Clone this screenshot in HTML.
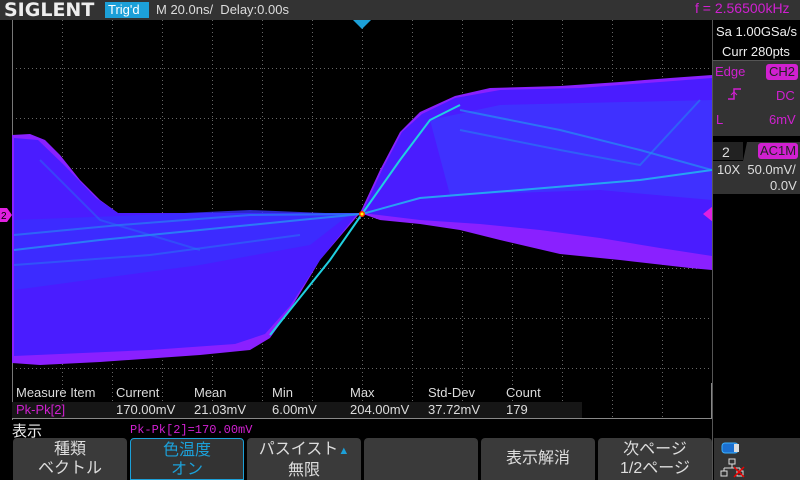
<!DOCTYPE html><html><head><meta charset="utf-8"><style>
*{margin:0;padding:0;box-sizing:border-box}
body{width:800px;height:480px;background:#000;position:relative;overflow:hidden;font-family:"Liberation Sans","Noto Sans CJK JP",sans-serif;color:#ddd}
.a{position:absolute;white-space:nowrap}
.btn{position:absolute;top:438px;width:114px;height:42px;background:#3a3a3a;border-radius:4px 4px 0 0;color:#ddd;font-size:16px;text-align:center;line-height:19px;padding-top:2px}
</style></head><body>
<div class="a" style="left:0;top:0;width:800px;height:20px;background:#333"></div>
<div class="a" style="left:4px;top:-1px;font-size:19px;font-weight:bold;color:#eee;font-family:'DejaVu Sans',sans-serif">SIGLENT</div>
<div class="a" style="left:105px;top:2px;width:44px;height:16px;background:#1ca0d8;color:#fff;font-size:13px;line-height:16px;padding-left:3px">Trig'd</div>
<div class="a" style="left:156px;top:2px;font-size:13px;color:#ddd">M 20.0ns/&nbsp; Delay:0.00s</div>
<div class="a" style="left:695px;top:0px;font-size:14px;color:#d020d0">f = 2.56500kHz</div>
<svg class="a" style="left:0;top:20px" width="712" height="400">
<g stroke="#666" stroke-dasharray="1,3" stroke-width="1">
<line x1="62.5" y1="0" x2="62.5" y2="400"/><line x1="112.5" y1="0" x2="112.5" y2="400"/><line x1="162.5" y1="0" x2="162.5" y2="400"/><line x1="212.5" y1="0" x2="212.5" y2="400"/><line x1="262.5" y1="0" x2="262.5" y2="400"/><line x1="312.5" y1="0" x2="312.5" y2="400"/><line x1="362.5" y1="0" x2="362.5" y2="400"/><line x1="412.5" y1="0" x2="412.5" y2="400"/><line x1="462.5" y1="0" x2="462.5" y2="400"/><line x1="512.5" y1="0" x2="512.5" y2="400"/><line x1="562.5" y1="0" x2="562.5" y2="400"/><line x1="612.5" y1="0" x2="612.5" y2="400"/><line x1="662.5" y1="0" x2="662.5" y2="400"/>
<line x1="12" y1="48.5" x2="712" y2="48.5"/><line x1="12" y1="98.5" x2="712" y2="98.5"/><line x1="12" y1="148.5" x2="712" y2="148.5"/><line x1="12" y1="198.5" x2="712" y2="198.5"/><line x1="12" y1="248.5" x2="712" y2="248.5"/><line x1="12" y1="298.5" x2="712" y2="298.5"/><line x1="12" y1="348.5" x2="712" y2="348.5"/>
</g>
<line x1="12.5" y1="0" x2="12.5" y2="400" stroke="#777"/>
<!-- left blob -->
<polygon fill="#8a20ff" points="12,115 30,114 45,120 60,135 80,160 100,180 118,193 360,193 320,240 290,290 270,318 250,330 200,335 100,342 40,345 12,343"/>
<polygon fill="#4a1cff" points="14,118 38,120 64,145 96,178 118,193 358,193 320,240 290,286 265,314 235,324 150,330 60,334 14,336"/>
<polygon fill="#3830ff" opacity=".8" points="14,200 120,196 250,190 350,194 310,225 200,245 14,270"/>
<!-- right blob -->
<polygon fill="#8a20ff" points="360,193 380,150 400,112 420,92 455,76 490,68 560,66 620,62 670,58 712,55 712,250 690,248 620,240 560,234 500,220 460,210 420,204 380,200"/>
<polygon fill="#4a1cff" points="362,193 382,150 402,112 422,94 455,78 500,70 580,68 660,62 712,58 712,236 660,228 600,218 540,210 480,204 420,200"/>
<polygon fill="#3840ff" opacity=".6" points="430,100 500,85 712,80 712,180 600,170 450,175"/>
<!-- traces -->
<g fill="none" stroke-width="2">
<path d="M270 315 L330 240 L362 194 L400 140 L430 100 L460 85" stroke="#20d0e0"/>
<path d="M362 194 L420 178 L520 170 L640 160 L712 150" stroke="#20c0f0" opacity=".8"/>
<path d="M460 90 L560 110 L640 130 L712 150" stroke="#20a0f0" opacity=".6"/>
<path d="M460 110 L560 130 L640 145 L700 80" stroke="#2090f0" opacity=".5"/>
<path d="M14 230 L100 220 L200 210 L300 200 L362 194" stroke="#20b0f0" opacity=".6"/>
<path d="M14 215 L120 205 L250 195 L362 194" stroke="#20a0f0" opacity=".5"/>
<path d="M14 245 L150 235 L300 215" stroke="#2090f0" opacity=".4"/>
<path d="M40 140 L100 200 L200 230" stroke="#2080f0" opacity=".4"/>
</g>
<circle cx="362" cy="194" r="3" fill="#ff3000"/>
<circle cx="362" cy="194" r="1.5" fill="#ffff00"/>
</svg>
<svg class="a" style="left:352px;top:20px" width="20" height="10"><polygon points="1,0 19,0 10,9" fill="#1ca0d8"/></svg>
<svg class="a" style="left:0;top:208px" width="12" height="14"><polygon points="0,0 7,0 12,7 7,14 0,14" fill="#e020e0"/><text x="1" y="11" font-size="10" fill="#000" font-family="Liberation Sans">2</text></svg>
<svg class="a" style="left:703px;top:206px" width="10" height="16"><polygon points="10,0 0,8 10,16" fill="#e020e0"/></svg>
<!-- right panel -->
<div class="a" style="left:712px;top:20px;width:1px;height:460px;background:#555"></div>
<div class="a" style="left:716px;top:24px;font-size:13px;color:#eee">Sa 1.00GSa/s</div>
<div class="a" style="left:722px;top:44px;font-size:13px;color:#eee">Curr 280pts</div>
<div class="a" style="left:713px;top:60px;width:87px;height:76px;background:#333;border-top:1px solid #555"></div>
<div class="a" style="left:715px;top:64px;font-size:13px;color:#d020d0">Edge</div>
<div class="a" style="left:766px;top:64px;width:32px;height:16px;background:#d020d0;border-radius:3px;color:#222;font-size:13px;text-align:center;line-height:16px">CH2</div>
<svg class="a" style="left:727px;top:87px" width="16" height="14"><path d="M1 12 H7 V2 H14" stroke="#d020d0" fill="none" stroke-width="1.5"/><path d="M4 8 L7 5 L10 8" stroke="#d020d0" fill="none"/></svg>
<div class="a" style="left:776px;top:88px;font-size:13px;color:#d020d0">DC</div>
<div class="a" style="left:716px;top:112px;font-size:13px;color:#d020d0">L</div>
<div class="a" style="left:769px;top:112px;font-size:13px;color:#d020d0">6mV</div>
<div class="a" style="left:713px;top:142px;width:30px;height:18px;background:#222"></div>
<div class="a" style="left:713px;top:142px;width:87px;height:52px;background:#333;clip-path:polygon(0 19px,30px 19px,34px 0,100% 0,100% 100%,0 100%)"></div>
<div class="a" style="left:722px;top:144px;font-size:14px;color:#ddd">2</div>
<div class="a" style="left:758px;top:143px;width:40px;height:16px;background:#d020d0;border-radius:3px;color:#222;font-size:13px;text-align:center;line-height:16px">AC1M</div>
<div class="a" style="left:717px;top:162px;font-size:13px;color:#ddd">10X &nbsp;50.0mV/</div>
<div class="a" style="left:770px;top:178px;font-size:13px;color:#ddd">0.0V</div>
<!-- measure -->
<div class="a" style="left:12px;top:402px;width:570px;height:16px;background:#161616"></div>
<div class="a" style="left:12px;top:418px;width:700px;height:1px;background:#888"></div>
<div class="a" style="left:711px;top:383px;width:1px;height:36px;background:#888"></div>
<div class="a" style="left:16px;top:385px;font-size:13px;color:#ddd">Measure Item</div>
<div class="a" style="left:116px;top:385px;font-size:13px">Current</div>
<div class="a" style="left:194px;top:385px;font-size:13px">Mean</div>
<div class="a" style="left:272px;top:385px;font-size:13px">Min</div>
<div class="a" style="left:350px;top:385px;font-size:13px">Max</div>
<div class="a" style="left:428px;top:385px;font-size:13px">Std-Dev</div>
<div class="a" style="left:506px;top:385px;font-size:13px">Count</div>
<div class="a" style="left:16px;top:402px;font-size:13px;color:#d020d0">Pk-Pk[2]</div>
<div class="a" style="left:116px;top:402px;font-size:13px">170.00mV</div>
<div class="a" style="left:194px;top:402px;font-size:13px">21.03mV</div>
<div class="a" style="left:272px;top:402px;font-size:13px">6.00mV</div>
<div class="a" style="left:350px;top:402px;font-size:13px">204.00mV</div>
<div class="a" style="left:428px;top:402px;font-size:13px">37.72mV</div>
<div class="a" style="left:506px;top:402px;font-size:13px">179</div>
<div class="a" style="left:12px;top:420px;font-size:15px;color:#eee">表示</div>
<div class="a" style="left:130px;top:423px;font-size:12px;color:#d020d0;font-family:'Liberation Mono',monospace">Pk-Pk[2]=170.00mV</div>
<div class="btn" style="left:13px">種類<br>ベクトル</div>
<div class="btn" style="left:130px;background:#333;border:1px solid #1ca0d8;color:#1ca0d8">色温度<br>オン</div>
<div class="btn" style="left:247px">パスイスト<span style="color:#1ca0d8;font-size:11px">▲</span><br>無限</div>
<div class="btn" style="left:364px"></div>
<div class="btn" style="left:481px;line-height:36px;padding-top:3px">表示解消</div>
<div class="btn" style="left:598px">次ページ<br>1/2ページ</div>
<div class="a" style="left:714px;top:438px;width:86px;height:42px;background:#333"></div>
<svg class="a" style="left:720px;top:441px" width="30" height="38"><rect x="2" y="2" width="16" height="10" rx="3" fill="#1c70d0" stroke="#3ab0ff"/><rect x="14" y="3" width="5" height="8" fill="#ddd"/><path d="M9 18 h6 v5 h-6z M12 23 v4 M4 27 h16 M4 27 v3 M20 27 v3 M1 30 h6 v5 h-6z M17 30 h6 v5 h-6z" stroke="#ddd" fill="none"/><path d="M14 26 L24 36 M24 26 L14 36" stroke="#e00" stroke-width="1.5"/></svg>
</body></html>
